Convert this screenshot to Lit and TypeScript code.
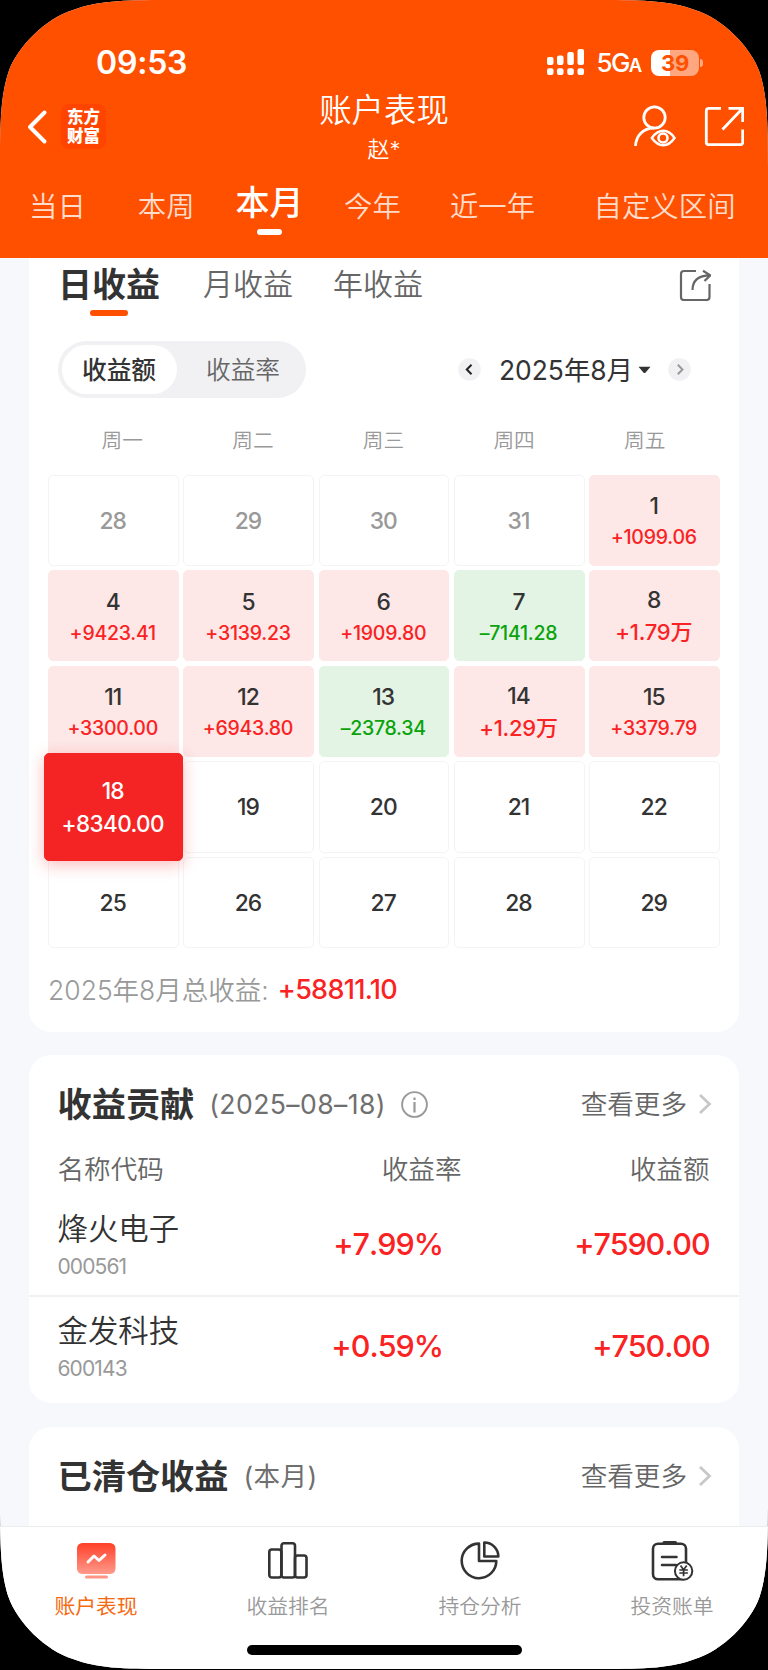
import { LitElement, html, css, svg, nothing } from "lit";
import { customElement } from "lit/decorators.js";
import { classMap } from "lit/directives/class-map.js";

interface Day {
  d: number;
  v?: string;
  out?: boolean;
  on?: boolean;
}

const DAYS: Day[] = [
  { d: 28, out: true }, { d: 29, out: true }, { d: 30, out: true }, { d: 31, out: true }, { d: 1, v: "+1099.06" },
  { d: 4, v: "+9423.41" }, { d: 5, v: "+3139.23" }, { d: 6, v: "+1909.80" }, { d: 7, v: "–7141.28" }, { d: 8, v: "+1.79万" },
  { d: 11, v: "+3300.00" }, { d: 12, v: "+6943.80" }, { d: 13, v: "–2378.34" }, { d: 14, v: "+1.29万" }, { d: 15, v: "+3379.79" },
  { d: 18, v: "+8340.00", on: true }, { d: 19 }, { d: 20 }, { d: 21 }, { d: 22 },
  { d: 25 }, { d: 26 }, { d: 27 }, { d: 28 }, { d: 29 },
];

const STOCKS = [
  { name: "烽火电子", code: "000561", rate: "+7.99%", gain: "+7590.00" },
  { name: "金发科技", code: "600143", rate: "+0.59%", gain: "+750.00" },
];

const shared = css`
  * { box-sizing: border-box; }
  svg { display: block; flex: none; fill: none; }
  :host {
    font-family: Inter, "Noto Sans CJK SC", sans-serif;
    white-space: nowrap;
  }
`;

@customElement("status-bar")
class StatusBar extends LitElement {
  static styles = [shared, css`
    :host { display: flex; align-items: center; height: 28px; margin-top: 49px; padding: 0 65px 0 96px; color: #fff; }
    .time { font-size: 32px; font-weight: 600; line-height: 28px; letter-spacing: -0.2px; flex: 1; }
    .net { display: flex; align-items: baseline; margin: 2px 0 0 11.500px; width: 54.500px; font-size: 26px; font-weight: 500; line-height: 28px; letter-spacing: -1.6px; }
    .net small { font-size: 18.500px; font-weight: 600; }
    .battery { width: 48px; height: 26px; border-radius: 8px; margin-top: -1px; background: linear-gradient(90deg, #fff 19px, #ffa77f 19px); color: #ff5000; font-size: 22px; font-weight: 700; line-height: 26px; text-align: center; letter-spacing: -0.3px; }
    .nub { width: 3px; height: 8px; margin-left: 1px; border-radius: 0 3px 3px 0; background: #ffa77f; }
  `];
  render() {
    return html`
      <span class="time">09:53</span>
      <svg width="38" height="28" viewBox="0 0 38 28">
        ${[[0, 8], [10, 6.5], [20.3, 3], [30.5, 0]].map(([x, y]) => svg`
          <rect x=${x} y=${y} width="6.5" height=${16 - y} rx="2" fill="#fff"/>
          <rect x=${x} y="19.3" width="6.5" height="6.7" rx="2" fill="#fff"/>`)}
      </svg>
      <span class="net">5G<small>A</small></span>
      <span class="battery">39</span><span class="nub"></span>`;
  }
}

@customElement("title-bar")
class TitleBar extends LitElement {
  static styles = [shared, css`
    :host { display: grid; grid-template-columns: 1fr 200px 1fr; height: 96px; margin-top: 9px; padding: 0 24.500px 0 26px; color: #fff; }
    .left, .right { display: flex; align-items: center; height: 82px; }
    .right { justify-content: flex-end; gap: 27.500px; height: 80px; }
    .left { gap: 13px; }
    .logo { width: 45px; height: 45px; border-radius: 8px; background: #ff4400; font-size: 16.5px; font-weight: 900; line-height: 19.3px; text-align: center; padding-top: 3.5px; margin-top: -1px; }
    .mid { text-align: center; font-weight: 350; padding: 2px 1.500px 0 0; }
    .name { font-size: 32.4px; line-height: 46px; }
    .user { font-size: 22px; line-height: 31px; }
  `];
  render() {
    return html`
      <div class="left">
        <svg width="22" height="36" viewBox="0 0 22 36"><path d="M18.5 3.5 4 18l14.500 14.500" stroke="#fff" stroke-width="4" stroke-linecap="round" stroke-linejoin="round"/></svg>
        <div class="logo">东方<br>财富</div>
      </div>
      <div class="mid"><div class="name">账户表现</div><div class="user">赵*</div></div>
      <div class="right">
        <svg width="43" height="42" viewBox="0 0 43 42" stroke="#fff" stroke-width="2.8">
          <circle cx="21.500" cy="12.500" r="10.700"/>
          <path d="M2.500 41C3 30.500 10 23.200 21 23"/>
          <path d="M18.800 33q5-7.200 11.500-7.200T41.500 33q-5 7.300-11.200 7.300T18.800 33z" stroke-width="2.400"/>
          <circle cx="30" cy="33" r="4.500" stroke-width="2.600"/>
        </svg>
        <svg width="40" height="40" viewBox="0 0 40 40" stroke="#fff" stroke-width="2.800">
          <path d="M17 2.300H5Q2.300 2.300 2.300 5v31.500q0 2.200 2.500 2.200H36.500q2.200 0 2.200-2.200V23.500M24.500 2.300H38.700V16M38 3 18.500 23.500"/>
        </svg>
      </div>`;
  }
}

@customElement("range-tabs")
class RangeTabs extends LitElement {
  static styles = [shared, css`
    :host { display: flex; height: 76px; padding-left: 29px; font-size: 28.400px; line-height: 49px; font-weight: 350; color: #ffdccc; }
    .a { margin-left: 52px; }
    .on { display: flex; flex-direction: column; align-items: center; margin-left: 41px; margin-right: 40.500px; color: #fff; font-size: 34px; font-weight: 500; line-height: 42px; }
    .on i { width: 25px; height: 6px; border-radius: 3px; background: #fff; margin-top: 5px; }
    .c { margin-left: 49px; }
    .d { margin-left: 58.500px; }
  `];
  render() {
    return html`<span>当日</span><span class="a">本周</span><span class="on">本月<i></i></span><span>今年</span><span class="c">近一年</span><span class="d">自定义区间</span>`;
  }
}

@customElement("profit-calendar")
class ProfitCalendar extends LitElement {
  static styles = [shared, css`
    :host { display: block; height: 774px; border-radius: 0 0 22px 22px; background: #fff; color: #333; }
    .tabs { display: flex; height: 83px; padding: 0 28.500px 0 31px; line-height: 53px; font-size: 30px; color: #666; font-weight: 350; }
    .tabs .t2 { margin-left: 45px; }
    .tabs .t3 { margin-left: 40px; flex: 1; }
    .on { display: flex; flex-direction: column; align-items: center; width: 98px; font-size: 34px; font-weight: 700; color: #333; }
    .on i { width: 38px; height: 6px; border-radius: 3px; background: #ff5000; margin-top: -1px; }
    .tabs svg { margin-top: 11px; }
    .bar { display: flex; align-items: center; height: 57px; padding: 0 48px 0 29px; }
    .seg { display: flex; align-items: center; width: 248px; height: 57px; padding: 4px; border-radius: 29px; background: #f1f1f4; font-size: 24.700px; font-weight: 350; color: #666; }
    .seg span { flex: 1; text-align: center; line-height: 50px; padding-left: 7px; }
    .seg .sel { flex: none; width: 115px; height: 49px; border-radius: 25px; background: #fff; color: #333; font-weight: 500; padding: 0 1px 0 0; }
    .month { display: flex; align-items: center; justify-content: space-between; margin-left: 152px; flex: 1; }
    .label { display: flex; align-items: center; gap: 5px; font-size: 26.400px; font-weight: 370; line-height: 40px; color: #333; margin-left: 1px; }
    .week { display: grid; grid-template-columns: repeat(5, 1fr); padding: 23px 29px 0 28px; height: 76.500px; line-height: 40px; font-size: 20.700px; color: #999; text-align: center; font-weight: 350; }
    .grid { display: grid; grid-template-columns: repeat(5, 1fr); grid-auto-rows: 91.300px; gap: 4.300px; padding: 0 19px; }
    .cell { display: flex; flex-direction: column; align-items: center; justify-content: center; border: 1px solid #f4f4f5; border-radius: 5px; padding: 1px 1.500px 0 0; font-size: 22.800px; font-weight: 530; line-height: 30px; letter-spacing: -0.900px; }
    .cell b { font-size: 19.500px; font-weight: 530; line-height: 33px; letter-spacing: -0.250px; }
    .cell b.wan { font-size: 22px; line-height: 34px; margin-bottom: 2px; }
    .up, .down { padding-top: 5px; }
    .up { background: #fde7e7; border-color: #fde7e7; }
    .up b { color: #fa2222; }
    .down { background: #e3f4e5; border-color: #e3f4e5; }
    .down b { color: #0aa30a; }
    .out { color: #999; }
    .sel-day { margin: -8px -4px; padding-top: 4px; background: #f52424; border-color: #f52424; color: #fff; box-shadow: 0 4px 16px rgba(245, 36, 36, 0.300); z-index: 1; }
    .sel-day b { color: #fff; font-size: 22.500px; line-height: 35px; letter-spacing: -0.600px; }
    .total { display: flex; gap: 9px; padding: 23px 19px 0; font-size: 26.500px; line-height: 38px; color: #999; font-weight: 360; }
    .total b { color: #fa2222; font-weight: 500; font-size: 27px; letter-spacing: -0.700px; }
  `];
  render() {
    return html`
      <div class="tabs">
        <span class="on">日收益<i></i></span><span class="t2">月收益</span><span class="t3">年收益</span>
        <svg width="32" height="32" viewBox="0 0 32 32" stroke="#666" stroke-width="2.200">
          <path d="M17 2H5Q2 2 2 5v23q0 3 3 3h22.500q3 0 3-3V15M13.500 21C13.500 12 18.500 6.500 31 6.300M24 1.700l7.300 4.600L25.500 12" />
        </svg>
      </div>
      <div class="bar">
        <div class="seg"><span class="sel">收益额</span><span>收益率</span></div>
        <div class="month">
          <svg width="23" height="23" viewBox="0 0 23 23"><circle cx="11.500" cy="11.500" r="11.300" fill="#f1f1f3"/><path d="M13.500 6.800 8.800 11.500l4.700 4.700" stroke="#222" stroke-width="2"/></svg>
          <span class="label">2025年8月<svg width="13" height="8" viewBox="0 0 13 8"><path d="M.5.700h12L7.600 6.600q-1.100 1-2.200 0z" fill="#333"/></svg></span>
          <svg width="23" height="23" viewBox="0 0 23 23"><circle cx="11.500" cy="11.500" r="11.300" fill="#f1f1f3"/><path d="m9.800 6.800 4.700 4.700-4.700 4.700" stroke="#999" stroke-width="2"/></svg>
        </div>
      </div>
      <div class="week">${["周一", "周二", "周三", "周四", "周五"].map((w) => html`<span>${w}</span>`)}</div>
      <div class="grid">
        ${DAYS.map((c) => html`
          <div class=${classMap({ cell: true, out: !!c.out, up: !!c.v && c.v[0] === "+" && !c.on, down: !!c.v && c.v[0] !== "+", "sel-day": !!c.on })}>
            <span>${c.d}</span>${c.v ? html`<b class=${classMap({ wan: c.v.endsWith("万") })}>${c.v}</b>` : nothing}
          </div>`)}
      </div>
      <div class="total"><span>2025年8月总收益:</span><b>+58811.10</b></div>`;
  }
}

@customElement("card-head")
class CardHead extends LitElement {
  static properties = { heading: {}, note: {}, info: { type: Boolean } };
  declare heading: string;
  declare note: string;
  declare info: boolean;
  static styles = [shared, css`
    :host { display: flex; align-items: center; height: 50px; padding: 0 27px 0 28.500px; color: #666; font-size: 26.600px; line-height: 50px; font-weight: 350; }
    h2 { margin: 1px 15px 0 0; font-size: 34.200px; font-weight: 700; color: #333; }
    .note { flex: none; color: #6f6f6f; font-weight: 370; letter-spacing: 0.400px; }
    .info { margin-left: 15px; }
    .more { margin-left: auto; }
    .arrow { margin-left: 11px; }
  `];
  render() {
    return html`
      <h2>${this.heading}</h2><span class="note">${this.note}</span>
      ${this.info ? html`<svg class="info" width="27" height="27" viewBox="0 0 27 27"><circle cx="13.500" cy="13.500" r="12.400" stroke="#999" stroke-width="1.900"/><path d="M13.500 11v10.500M13.500 6.500v2.500" stroke="#999" stroke-width="2.200"/></svg>` : nothing}
      <span class="more">查看更多</span>
      <svg class="arrow" width="14" height="22" viewBox="0 0 14 22"><path d="m2 2 9.500 9L2 20" stroke="#c8c8c8" stroke-width="2.800"/></svg>`;
  }
}

@customElement("contribution-card")
class ContributionCard extends LitElement {
  static styles = [shared, css`
    :host { display: block; height: 348px; margin-top: 23px; padding-top: 24px; border-radius: 22px; background: #fff; }
    .row { display: grid; grid-template-columns: 210px 174px 1fr; padding: 0 29.500px 0 28.500px; align-items: center; }
    .th { height: 40px; margin-top: 19.500px; margin-bottom: 5.500px; font-size: 26.600px; line-height: 40px; color: #666; font-weight: 350; }
    .r { text-align: right; }
    .th .m { text-align: right; margin-right: -20px; }
    .tr { height: 100.500px; }
    .tr + .tr { border-top: 2px solid #f1f1f3; }
    .name { font-size: 30.400px; line-height: 41px; color: #333; margin-top: 4px; font-weight: 350; }
    .code { font-size: 21px; line-height: 33px; color: #999; font-weight: 400; letter-spacing: -0.900px; }
    .num { font-size: 30.500px; font-weight: 530; color: #fa2222; text-align: right; font-kerning: none; letter-spacing: -1.100px; line-height: 40px; padding-right: 0; }
    .rate { letter-spacing: -1px; margin-right: -1.500px; }
  `];
  render() {
    return html`
      <card-head heading="收益贡献" note="(2025–08–18)" info></card-head>
      <div class="row th"><span>名称代码</span><span class="m">收益率</span><span class="r">收益额</span></div>
      ${STOCKS.map((s) => html`
        <div class="row tr">
          <div><div class="name">${s.name}</div><div class="code">${s.code}</div></div>
          <span class="num rate">${s.rate}</span><span class="num">${s.gain}</span>
        </div>`)}`;
  }
}

@customElement("bottom-nav")
class BottomNav extends LitElement {
  static styles = [shared, css`
    :host { display: block; height: 144px; border-top: 1px solid #ececee; background: #fff; }
    .items { display: grid; grid-template-columns: repeat(4, 1fr); height: 118px; }
    .item { display: flex; flex-direction: column; align-items: center; padding-top: 12px; font-size: 20.800px; line-height: 30px; color: #999; font-weight: 350; }
    .item svg { margin-bottom: 11px; }
    .cur { color: #f56a12; font-weight: 400; }
    .home { width: 275px; height: 10px; border-radius: 5px; background: #000; margin: 0 auto; }
  `];
  render() {
    return html`
      <div class="items">
        <div class="item cur">
          <svg width="44" height="42" viewBox="0 0 44 42"><defs><linearGradient id="g" x1="0" y1="0" x2="0" y2="1"><stop offset="0" stop-color="#ff4028"/><stop offset="1" stop-color="#ff9a8c"/></linearGradient></defs>
            <rect x="3" y="4" width="38.500" height="31" rx="5.500" fill="url(#g)"/><rect x="11" y="36.500" width="23" height="3" rx="1.500" fill="#ff9585"/>
            <path d="m14 23 6-6 5 4.500 6-5.500" stroke="#fff" stroke-width="3" stroke-linecap="round" stroke-linejoin="round"/></svg>
          账户表现</div>
        <div class="item">
          <svg width="44" height="42" viewBox="0 0 44 42" stroke="#333" stroke-width="2.600"><rect x="3.300" y="10.500" width="12" height="28" rx="2.500"/><rect x="15.500" y="4.300" width="13.500" height="34.200" rx="2.500"/><rect x="29" y="16.500" width="11.500" height="22" rx="2.500"/></svg>
          收益排名</div>
        <div class="item">
          <svg width="44" height="42" viewBox="0 0 44 42" stroke="#333" stroke-width="2.600" stroke-linejoin="round"><path d="M21 4.600A17.300 17.300 0 1 0 38.300 22H21z"/><path d="M26.300 3.500V17.500H40.300A14 14 0 0 0 26.300 3.500z"/></svg>
          持仓分析</div>
        <div class="item">
          <svg width="44" height="42" viewBox="0 0 44 42" stroke="#333" stroke-width="2.600"><rect x="3" y="4.800" width="33" height="35.500" rx="5"/><path d="M14 3.500h11.500" stroke-width="3" stroke-linecap="round"/><path d="M12 18h14.500M12 26H26" stroke-width="2.600" stroke-linecap="round"/><circle cx="33.600" cy="32" r="8.700" fill="#fff" stroke-width="2"/><path d="m30.500 26.500 3.100 4.200 3.100-4.200M33.600 30.700v6.500M29.300 31h8.600M29.300 34h8.600" stroke-width="1.700"/></svg>
          投资账单</div>
      </div>
      <div class="home"></div>`;
  }
}

@customElement("app-root")
class AppRoot extends LitElement {
  static styles = [shared, css`
    :host { display: block; width: 768px; height: 1670px; overflow: hidden; background: #000; }
    .screen {
      display: flex; flex-direction: column; height: 1670px; background: #f6f8fb;
      clip-path: path("M0 168C0 120 1 95 8.500 72C17 47 46 18 73 10C96 1 122 0 168 0H600C646 0 672 1 695 10C722 18 751 47 759.500 72C767 95 768 120 768 168V1501C768 1549 767 1574 759.500 1597C751 1622 722 1651 695 1659C672 1668 646 1669 600 1669H168C122 1669 96 1668 73 1659C46 1651 17 1622 8.500 1597C1 1574 0 1549 0 1501Z");
    }
    header { height: 258px; flex: none; background: #ff5000; display: flex; flex-direction: column; }
    main { flex: 1; min-height: 0; overflow: hidden; padding: 0 29px; }
    .cleared { height: 160px; margin-top: 24px; padding-top: 24px; background: #fff; border-radius: 22px 22px 0 0; }
  `];
  render() {
    return html`
      <div class="screen">
        <header><status-bar></status-bar><title-bar></title-bar><range-tabs></range-tabs></header>
        <main>
          <profit-calendar></profit-calendar>
          <contribution-card></contribution-card>
          <div class="cleared"><card-head heading="已清仓收益" note="(本月)"></card-head></div>
        </main>
        <bottom-nav></bottom-nav>
      </div>`;
  }
}
